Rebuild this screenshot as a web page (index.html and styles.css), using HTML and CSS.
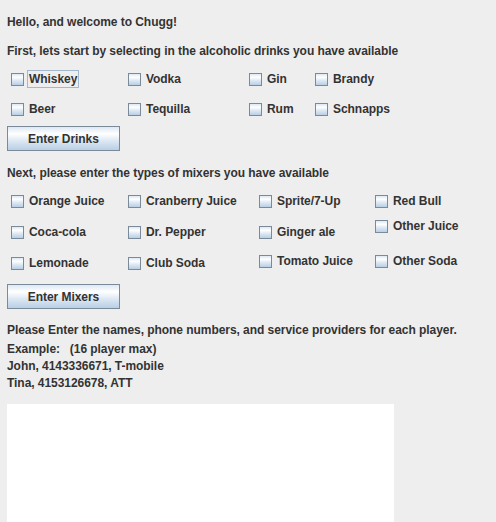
FILE: index.html
```html
<!DOCTYPE html>
<html>
<head>
<meta charset="utf-8">
<title>Chugg</title>
<link rel="stylesheet" href="styles.css">
</head>
<body>
<div class="frame">
  <p class="line">Hello, and welcome to Chugg!</p>
  <p class="line first">First, lets start by selecting in the alcoholic drinks you have available</p>

  <div class="drinks">
    <label class="check"><input type="checkbox" class="box"><span class="txt focus">Whiskey</span></label>
    <label class="check"><input type="checkbox" class="box"><span class="txt">Vodka</span></label>
    <label class="check"><input type="checkbox" class="box"><span class="txt">Gin</span></label>
    <label class="check"><input type="checkbox" class="box"><span class="txt">Brandy</span></label>
    <label class="check"><input type="checkbox" class="box"><span class="txt">Beer</span></label>
    <label class="check"><input type="checkbox" class="box"><span class="txt">Tequilla</span></label>
    <label class="check"><input type="checkbox" class="box"><span class="txt">Rum</span></label>
    <label class="check"><input type="checkbox" class="box"><span class="txt">Schnapps</span></label>
  </div>

  <button class="btn btn-drinks">Enter Drinks</button>

  <p class="line next">Next, please enter the types of mixers you have available</p>

  <div class="mixers">
    <div class="col col1">
      <label class="check"><input type="checkbox" class="box"><span class="txt">Orange Juice</span></label>
      <label class="check"><input type="checkbox" class="box"><span class="txt">Coca-cola</span></label>
      <label class="check"><input type="checkbox" class="box"><span class="txt">Lemonade</span></label>
    </div>
    <div class="col col2">
      <label class="check"><input type="checkbox" class="box"><span class="txt">Cranberry Juice</span></label>
      <label class="check"><input type="checkbox" class="box"><span class="txt">Dr. Pepper</span></label>
      <label class="check"><input type="checkbox" class="box"><span class="txt">Club Soda</span></label>
    </div>
    <div class="col col3">
      <label class="check"><input type="checkbox" class="box"><span class="txt">Sprite/7-Up</span></label>
      <label class="check"><input type="checkbox" class="box"><span class="txt">Ginger ale</span></label>
      <label class="check"><input type="checkbox" class="box"><span class="txt">Tomato Juice</span></label>
    </div>
    <div class="col col4">
      <label class="check"><input type="checkbox" class="box"><span class="txt">Red Bull</span></label>
      <label class="check"><input type="checkbox" class="box"><span class="txt">Other Juice</span></label>
      <label class="check"><input type="checkbox" class="box"><span class="txt">Other Soda</span></label>
    </div>
  </div>

  <button class="btn btn-mixers">Enter Mixers</button>

  <div class="players">
    <p class="pline lead">Please Enter the names, phone numbers, and service providers for each player.</p>
    <p class="pline">Example:   (16 player max)</p>
    <p class="pline">John, 4143336671, T-mobile</p>
    <p class="pline">Tina, 4153126678, ATT</p>
  </div>

  <div class="textarea"></div>
</div>
</body>
</html>
```

FILE: styles.css
```css
* { box-sizing: border-box; }

html, body {
  margin: 0;
  padding: 0;
  background: #eeeeee;
  overflow: hidden;
}

.frame {
  padding: 14px 0 0 7px;
  font-family: "Liberation Sans", Arial, sans-serif;
  font-weight: bold;
  font-size: 12px;
  letter-spacing: -0.05px;
  color: #333333;
}

.line {
  margin: 0;
  line-height: 16px;
  white-space: nowrap;
}

.first { margin-top: 13px; }
.next { margin-top: 14px; }

.drinks {
  margin-top: 11px;
  display: grid;
  grid-template-columns: 117px 121px 66px auto;
  grid-auto-rows: 18px;
  row-gap: 12px;
}

.check {
  display: flex;
  align-items: flex-start;
  height: 18px;
  white-space: nowrap;
}

.box {
  appearance: none;
  -webkit-appearance: none;
  width: 13px;
  height: 13px;
  margin: 3px 3px 0 4px;
  flex: none;
  border: 1px solid #7a8a99;
  background: linear-gradient(to bottom, #dde8f3 0%, #ffffff 30%, #dde8f3 60%, #b8cfe5 100%);
}

.txt {
  display: block;
  line-height: 16px;
  border: 1px solid transparent;
  padding: 0 1px;
}

.txt.focus { border-color: #a3b8cc; }

.btn {
  display: block;
  width: 113px;
  height: 25px;
  padding: 0;
  margin: 0;
  border: 1px solid #7a8a99;
  background: linear-gradient(to bottom, #dde8f3 0%, #ffffff 30%, #dde8f3 60%, #b8cfe5 100%);
  font: inherit;
  letter-spacing: inherit;
  color: #333333;
  line-height: 16px;
  text-align: center;
}

.btn-drinks { margin-top: 8px; }
.btn-mixers { margin-top: 12px; }

.mixers {
  margin-top: 11px;
  display: flex;
  align-items: flex-start;
}

.col {
  display: flex;
  flex-direction: column;
}

.col1 { width: 117px; gap: 13px; }
.col2 { width: 131px; gap: 13px; }
.col3 { width: 116px; }
.col3 .check:nth-child(2) { margin-top: 13px; }
.col3 .check:nth-child(3) { margin-top: 11px; }
.col4 .check:nth-child(2) { margin-top: 7px; }
.col4 .check:nth-child(3) { margin-top: 17px; }

.players { margin-top: 13px; }

.pline {
  margin: 0;
  line-height: 17px;
  white-space: pre;
}

.pline.lead { margin-bottom: 2px; }

.textarea {
  margin-top: 12px;
  width: 387px;
  height: 140px;
  background: #ffffff;
}
```
